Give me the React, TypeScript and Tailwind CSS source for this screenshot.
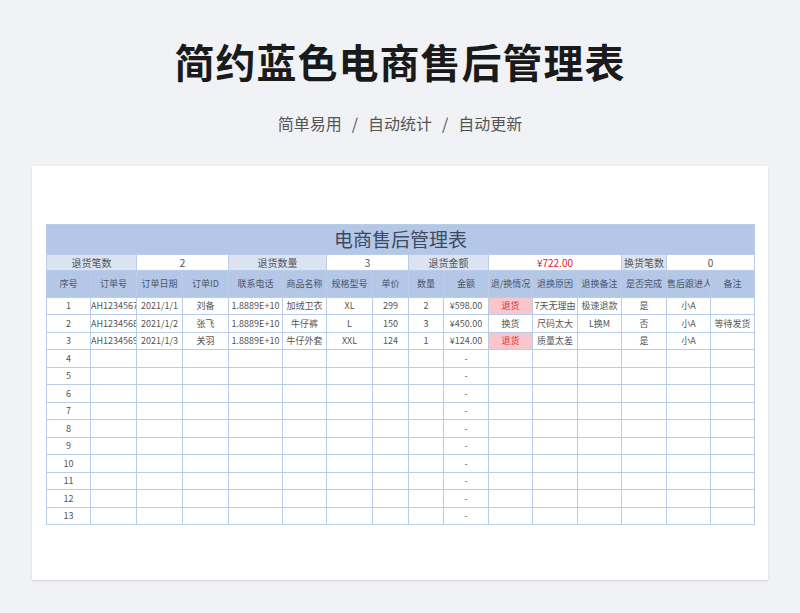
const widths = [44, 46, 46, 46, 54, 44, 46, 36, 35, 45, 44, 45, 44, 45, 44, 44];
const heads = ["序号", "订单号", "订单日期", "订单ID", "联系电话", "商品名称", "规格型号", "单价", "数量", "金额", "退/换情况", "退换原因", "退换备注", "是否完成", "售后跟进人", "备注"];
const data = [
  ["1", "AH12345678", "2021/1/1", "刘备", "1.8889E+10", "加绒卫衣", "XL", "299", "2", "¥598.00", "退货", "7天无理由", "极速退款", "是", "小A", ""],
  ["2", "AH12345689", "2021/1/2", "张飞", "1.8889E+10", "牛仔裤", "L", "150", "3", "¥450.00", "换货", "尺码太大", "L换M", "否", "小A", "等待发货"],
  ["3", "AH12345690", "2021/1/3", "关羽", "1.8889E+10", "牛仔外套", "XXL", "124", "1", "¥124.00", "退货", "质量太差", "", "是", "小A", ""],
];
const rows = [...data];
for (let i = 4; i <= 13; i++) rows.push([String(i), "", "", "", "", "", "", "", "", "-", "", "", "", "", "", ""]);

const cell = "border border-[#b9cde8] overflow-hidden whitespace-nowrap text-center p-0";

export default function App() {
  return (
    <div className="w-[800px] h-[613px] bg-[#f1f2f6] flex flex-col items-center" style={{ fontFamily: '"Noto Sans CJK SC", "Liberation Sans", sans-serif' }}>
      <h1 className="mt-[33px] h-[56px] text-[40px] font-bold leading-[56px] text-[#1a1a1a] tracking-[1px]">简约蓝色电商售后管理表</h1>
      <p className="mt-[22px] flex gap-[10px] text-[16px] leading-[24px] text-[#555]">
        <span>简单易用</span><span>/</span><span>自动统计</span><span>/</span><span>自动更新</span>
      </p>
      <div className="mt-[31px] w-[736px] h-[414px] bg-white pl-[14px] pt-[58px] shadow-sm">
        <table className="table-fixed border-collapse text-[9px] text-[#555]" style={{ width: 708 }}>
          <colgroup>
            {widths.map((w, i) => <col key={i} style={{ width: w }} />)}
          </colgroup>
          <tbody>
            <tr className="h-[28px] bg-[#b4c7e7]">
              <td colSpan={16} className="text-center text-[19px] text-[#3d4a60] border border-[#b9cde8] p-0">电商售后管理表</td>
            </tr>
            <tr className="h-[16px] text-[10px]">
              <td colSpan={2} className={`${cell} bg-[#dbe3f2]`}>退货笔数</td>
              <td colSpan={2} className={cell}>2</td>
              <td colSpan={2} className={`${cell} bg-[#dbe3f2]`}>退货数量</td>
              <td colSpan={2} className={cell}>3</td>
              <td colSpan={2} className={`${cell} bg-[#dbe3f2]`}>退货金额</td>
              <td colSpan={3} className={`${cell} text-[#e0202a]`}>¥722.00</td>
              <td className={`${cell} bg-[#dbe3f2]`}>换货笔数</td>
              <td colSpan={2} className={cell}>0</td>
            </tr>
            <tr className="h-[27px] bg-[#b4c7e7] text-[#4a5568]">
              {heads.map((h, i) => <td key={i} className={cell}>{h}</td>)}
            </tr>
            {rows.map((r, ri) => (
              <tr key={ri} className="h-[17.5px]">
                {r.map((c, ci) => (
                  <td key={ci} className={`${cell} ${ci === 10 && c === "退货" ? "bg-[#f9c6cb] text-[#e0303c]" : ""}`}>{c}</td>
                ))}
              </tr>
            ))}
          </tbody>
        </table>
      </div>
    </div>
  );
}
